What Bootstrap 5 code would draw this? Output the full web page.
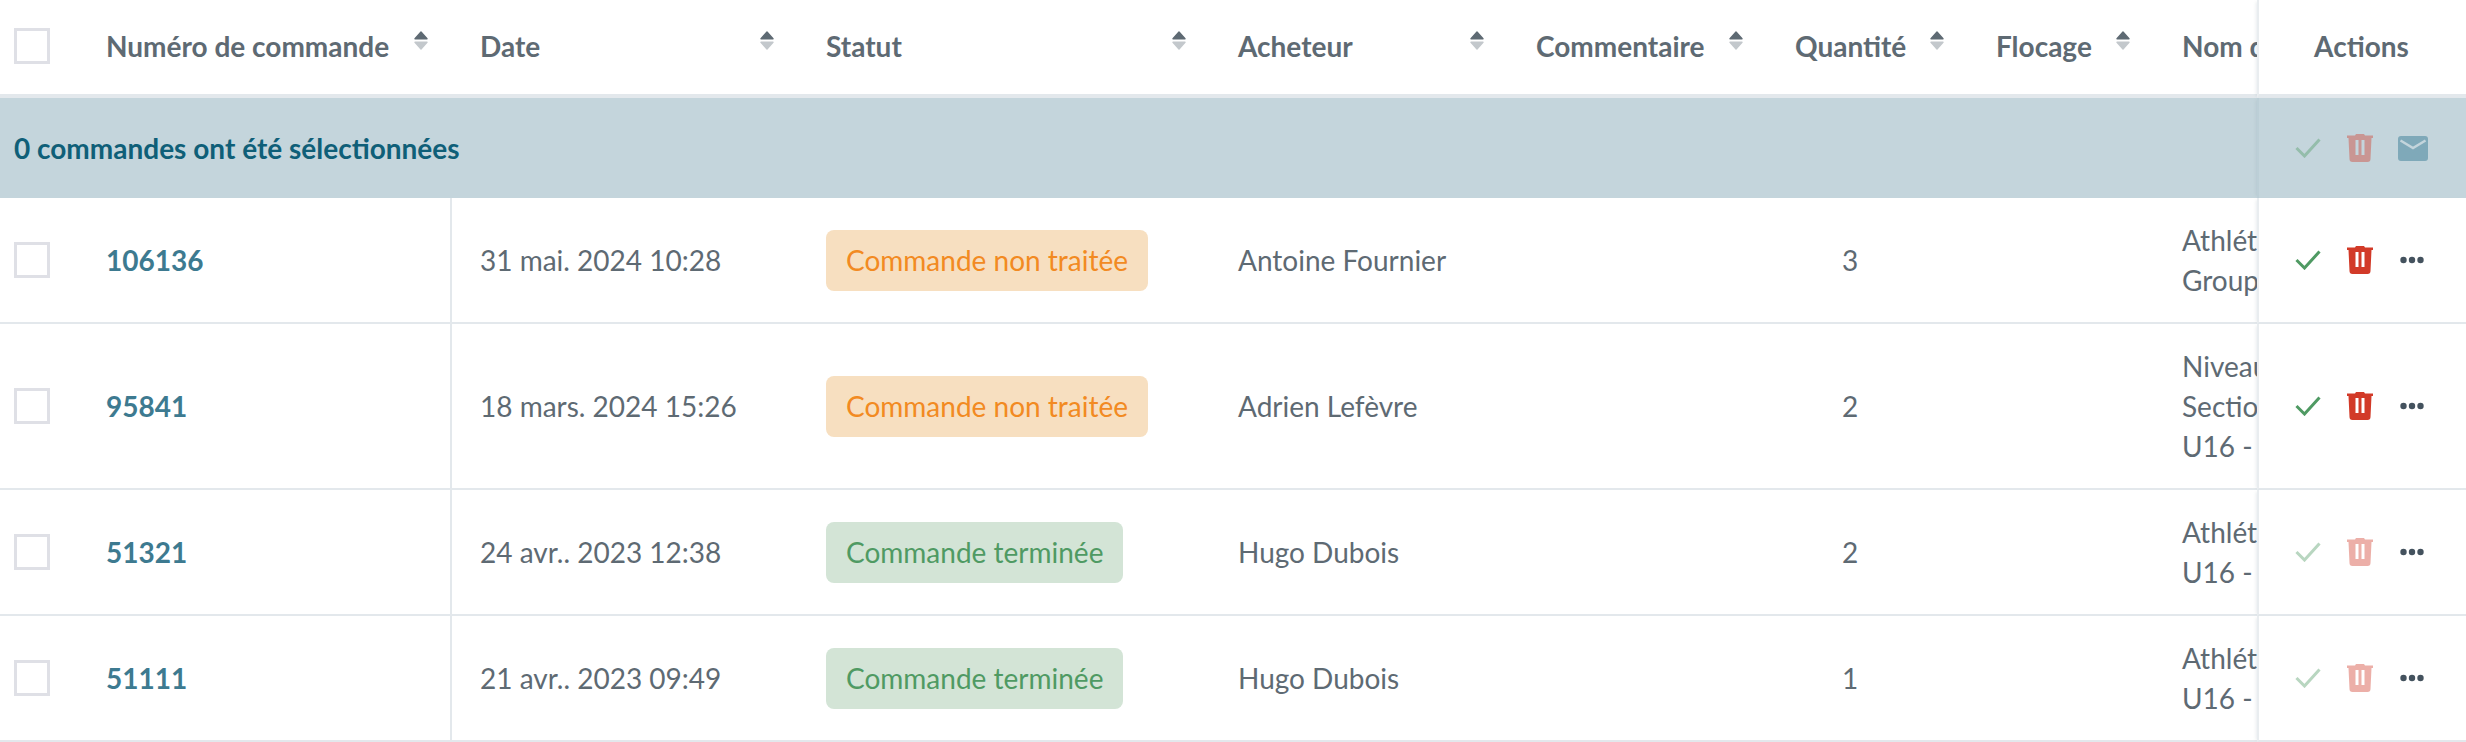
<!DOCTYPE html>
<html lang="fr">
<head>
<meta charset="utf-8">
<title>Commandes</title>
<link href="https://cdn.jsdelivr.net/npm/bootstrap@5.3.0/dist/css/bootstrap.min.css" rel="stylesheet">
<style>
body{margin:0;background:#fff;font-family:Lato,"Liberation Sans",sans-serif;}
.orders-wrap{width:2466px;height:742px;overflow:hidden;}
.orders{table-layout:fixed;border-collapse:separate;border-spacing:0;width:2466px;font-size:28px;line-height:40px;color:#5e6a73;margin:0;}
.w-a{width:76px}.w-b{width:374px}.w-c{width:346px}.w-d{width:412px}.w-e{width:298px}.w-f{width:259px}.w-g{width:201px}.w-h{width:186px}.w-i{width:105px}.w-j{width:209px}
.orders th,.orders td{padding:22px 22px 22px 30px;vertical-align:middle;background:#fff;}
.orders thead th{height:98px;padding-top:0;padding-bottom:3px;border-bottom:4px solid #e3e8ec;font-weight:700;color:#5e6a73;white-space:nowrap;}
.orders tbody td{border-bottom:2px solid #e3e8ec;white-space:nowrap;}
.orders .col-check{padding-left:14px;padding-right:0;}
.orders .col-date{border-left:2px solid #e3e8ec;padding-left:28px;}
.orders .col-name{padding-right:0;overflow:hidden;}
.box{display:block;width:36px;height:36px;border:3px solid #dfe0e6;background:#fff;}
.sorter{display:block;width:14px;height:19px;margin-top:-10px;flex:none;}
.order-link{color:#3d7a90;font-weight:700;}
.state{display:inline-block;height:61px;line-height:61px;padding:0 20px;border-radius:8px;}
.state-wait{background:#f7dfc0;color:#f28a22;}
.state-done{background:#d3e4d6;color:#4f9a63;}
.orders td.qty{text-align:center;padding-right:61px;}
.orders tr.bar-row td{height:100px;padding:0 14px;background:#c4d5dc;border-bottom:0;color:#0f5f78;font-weight:700;}
.orders .act{padding:0;text-align:center;box-shadow:-3px 0 3px -2px rgba(120,135,150,.16);border-left:2px solid #e9edf0;}
.orders thead th.act{padding:0 2px 3px 0;}
.orders tbody td.act{padding:0;}
.orders tr.bar-row td.act{padding:0;border-left-color:#bccfd7;}
.act-line{height:40px;padding-left:36px;}
.act-line svg{display:block;flex:none;}
.ico-check{width:26px;height:20px;margin-right:26px;}
.ico-trash{width:26px;height:28px;margin-right:27px;}
.ico-dots{width:24px;height:8px;}
.ico-mail{width:30px;height:25px;margin-left:-2px;}
.faded{opacity:.4;}
.cell-name{display:block;}
</style>
</head>
<body>
<svg class="d-none" aria-hidden="true">
<symbol id="i-sort" viewBox="0 0 14 19"><path d="M7 1 13 7.800H1Z" fill="#5e6a73" stroke="#5e6a73" stroke-width="1.400" stroke-linejoin="round"/><path d="M1 11.200H13L7 18Z" fill="#c3c8cc" stroke="#c3c8cc" stroke-width="1.400" stroke-linejoin="round"/></symbol>
<symbol id="i-check" viewBox="0 0 26 20"><path d="M1.500 10 9.500 18 24.500 1.500" fill="none" stroke="#4f9a63" stroke-width="3"/></symbol>
<symbol id="i-trash" viewBox="0 0 26 28"><path fill-rule="evenodd" d="M0 1.500H8L9 0H17L18 1.500H26V4H24.500L23.500 25a3 3 0 0 1-3 3H5.500a3 3 0 0 1-3-3L1.500 4H0ZM8.500 6V21H11.500V6ZM14.500 6V21H17.500V6Z" fill="#d23a28"/></symbol>
<symbol id="i-dots" viewBox="0 0 24 8"><circle cx="3.500" cy="4" r="3.200" fill="#44525e"/><circle cx="12" cy="4" r="3.200" fill="#44525e"/><circle cx="20.500" cy="4" r="3.200" fill="#44525e"/></symbol>
<symbol id="i-mail" viewBox="0 0 30 25"><rect width="30" height="25" rx="3" fill="#7fa9b9"/><path d="M2.500 4.500 15 12 27.500 4.500" fill="none" stroke="#c4d5dc" stroke-width="2.500"/></symbol>
</svg>
<div class="orders-wrap">
<table class="orders">
<colgroup>
<col class="w-a"><col class="w-b"><col class="w-c"><col class="w-d"><col class="w-e"><col class="w-f"><col class="w-g"><col class="w-h"><col class="w-i"><col class="w-j">
</colgroup>
<thead>
<tr>
<th class="col-check"><span class="box"></span></th>
<th><div class="d-flex justify-content-between align-items-center"><span>Numéro de commande</span><svg class="sorter"><use href="#i-sort"/></svg></div></th>
<th><div class="d-flex justify-content-between align-items-center"><span>Date</span><svg class="sorter"><use href="#i-sort"/></svg></div></th>
<th><div class="d-flex justify-content-between align-items-center"><span>Statut</span><svg class="sorter"><use href="#i-sort"/></svg></div></th>
<th><div class="d-flex justify-content-between align-items-center"><span>Acheteur</span><svg class="sorter"><use href="#i-sort"/></svg></div></th>
<th><div class="d-flex justify-content-between align-items-center"><span>Commentaire</span><svg class="sorter"><use href="#i-sort"/></svg></div></th>
<th><div class="d-flex justify-content-between align-items-center"><span>Quantité</span><svg class="sorter"><use href="#i-sort"/></svg></div></th>
<th><div class="d-flex justify-content-between align-items-center"><span>Flocage</span><svg class="sorter"><use href="#i-sort"/></svg></div></th>
<th class="col-name">Nom d</th>
<th class="act">Actions</th>
</tr>
</thead>
<tbody>
<tr class="bar-row">
<td colspan="9">0 commandes ont été sélectionnées</td>
<td class="act"><div class="act-line d-flex align-items-center">
<svg class="ico-check faded"><use href="#i-check"/></svg>
<svg class="ico-trash faded"><use href="#i-trash"/></svg>
<svg class="ico-mail"><use href="#i-mail"/></svg>
</div></td>
</tr>
<tr>
<td class="col-check"><span class="box"></span></td>
<td><a class="order-link text-decoration-none" href="#">106136</a></td>
<td class="col-date">31 mai. 2024 10:28</td>
<td><span class="state state-wait">Commande non traitée</span></td>
<td>Antoine Fournier</td><td></td><td class="qty">3</td><td></td>
<td class="col-name"><span class="cell-name">Athlét</span><span class="cell-name">Group</span></td>
<td class="act"><div class="act-line d-flex align-items-center">
<svg class="ico-check"><use href="#i-check"/></svg>
<svg class="ico-trash"><use href="#i-trash"/></svg>
<svg class="ico-dots"><use href="#i-dots"/></svg>
</div></td>
</tr>
<tr>
<td class="col-check"><span class="box"></span></td>
<td><a class="order-link text-decoration-none" href="#">95841</a></td>
<td class="col-date">18 mars. 2024 15:26</td>
<td><span class="state state-wait">Commande non traitée</span></td>
<td>Adrien Lefèvre</td><td></td><td class="qty">2</td><td></td>
<td class="col-name"><span class="cell-name">Niveau</span><span class="cell-name">Section</span><span class="cell-name">U16 -</span></td>
<td class="act"><div class="act-line d-flex align-items-center">
<svg class="ico-check"><use href="#i-check"/></svg>
<svg class="ico-trash"><use href="#i-trash"/></svg>
<svg class="ico-dots"><use href="#i-dots"/></svg>
</div></td>
</tr>
<tr>
<td class="col-check"><span class="box"></span></td>
<td><a class="order-link text-decoration-none" href="#">51321</a></td>
<td class="col-date">24 avr.. 2023 12:38</td>
<td><span class="state state-done">Commande terminée</span></td>
<td>Hugo Dubois</td><td></td><td class="qty">2</td><td></td>
<td class="col-name"><span class="cell-name">Athlét</span><span class="cell-name">U16 -</span></td>
<td class="act"><div class="act-line d-flex align-items-center">
<svg class="ico-check faded"><use href="#i-check"/></svg>
<svg class="ico-trash faded"><use href="#i-trash"/></svg>
<svg class="ico-dots"><use href="#i-dots"/></svg>
</div></td>
</tr>
<tr>
<td class="col-check"><span class="box"></span></td>
<td><a class="order-link text-decoration-none" href="#">51111</a></td>
<td class="col-date">21 avr.. 2023 09:49</td>
<td><span class="state state-done">Commande terminée</span></td>
<td>Hugo Dubois</td><td></td><td class="qty">1</td><td></td>
<td class="col-name"><span class="cell-name">Athlét</span><span class="cell-name">U16 -</span></td>
<td class="act"><div class="act-line d-flex align-items-center">
<svg class="ico-check faded"><use href="#i-check"/></svg>
<svg class="ico-trash faded"><use href="#i-trash"/></svg>
<svg class="ico-dots"><use href="#i-dots"/></svg>
</div></td>
</tr>
</tbody>
</table>
</div>
<script src="https://cdn.jsdelivr.net/npm/bootstrap@5.3.0/dist/js/bootstrap.bundle.min.js"></script>
</body>
</html>
